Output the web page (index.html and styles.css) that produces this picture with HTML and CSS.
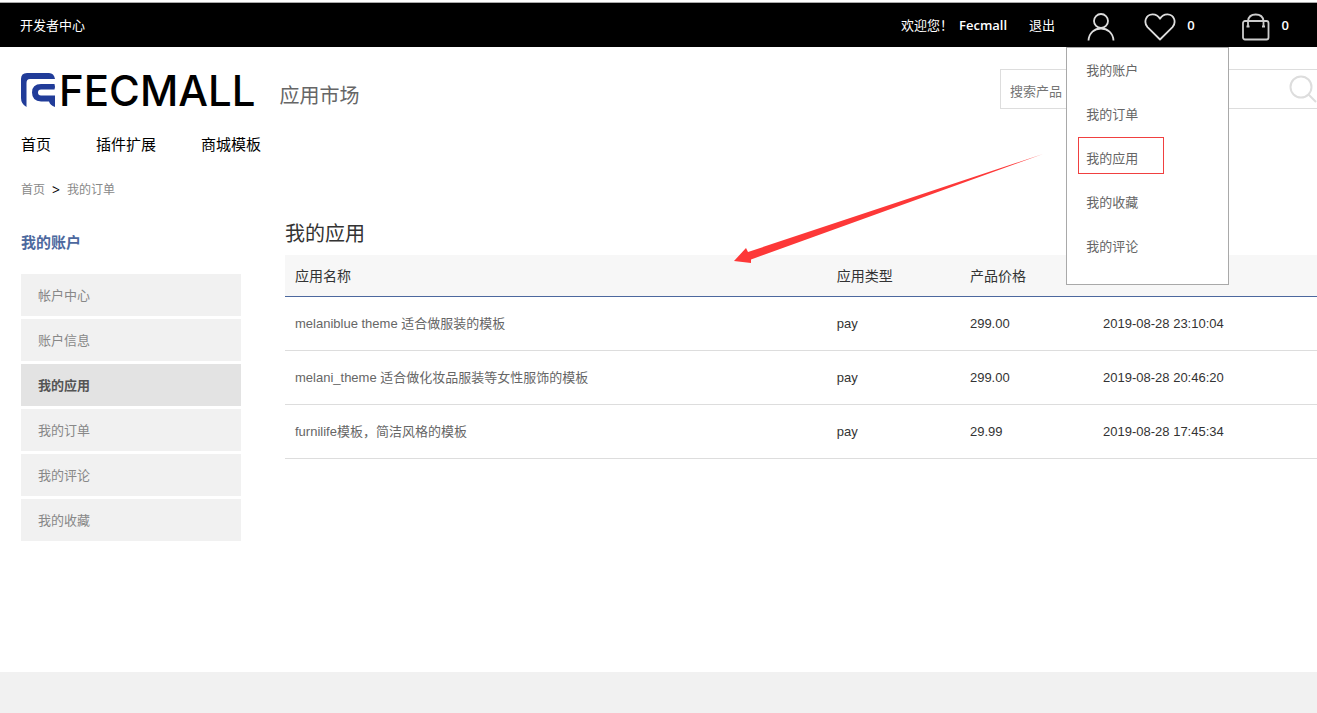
FILE: index.html
```html
<!DOCTYPE html>
<html lang="zh-CN">
<head>
<meta charset="utf-8">
<meta name="viewport" content="width=device-width, initial-scale=1">
<title>我的应用 - Fecmall 应用市场</title>
<link rel="stylesheet" href="styles.css">
</head>
<body>
<div class="topbar">
  <a class="topbar-link" href="#">开发者中心</a>
  <div class="topbar-right">
    <span class="welcome">欢迎您！</span>
    <a class="username" href="#">Fecmall</a>
    <a class="logout" href="#">退出</a>
    <div class="account">
      <button class="icon-button" type="button" aria-label="我的账户" aria-expanded="true">
        <svg width="28" height="28" viewBox="0 0 28 28" fill="none" stroke="#ddd" stroke-width="1.800"><circle cx="14" cy="8" r="7"/><path d="M1.500 27.500C2 20 7.500 15.500 14 15.500S26 20 26.500 27.500"/></svg>
      </button>
      <ul class="account-menu">
        <li><a href="#">我的账户</a></li>
        <li><a href="#">我的订单</a></li>
        <li><a class="marked" href="#">我的应用</a></li>
        <li><a href="#">我的收藏</a></li>
        <li><a href="#">我的评论</a></li>
      </ul>
    </div>
    <a class="counter wishlist" href="#" aria-label="收藏">
      <svg width="32" height="28" viewBox="0 0 32 28" fill="none" stroke="#ddd" stroke-width="1.800" stroke-linejoin="round"><path d="M16 26.500L3.500 14.200C-.5 9.500 1.500 1.500 8.500 1.300C12 1.200 14.500 3.200 16 5.800C17.500 3.200 20 1.200 23.500 1.300C30.500 1.500 32.500 9.500 28.500 14.200Z"/></svg>
      <span>0</span>
    </a>
    <a class="counter cart" href="#" aria-label="购物车">
      <svg width="28" height="28" viewBox="0 0 28 28" fill="none" stroke="#ccc" stroke-width="1.800"><rect x="1" y="8" width="25.500" height="18.500" rx="2"/><path d="M6 13.500V8C6.500 3.500 9 1.500 13.700 1.500S21 3.500 21.500 8V13.500"/><path d="M4.500 13.500h3M20 13.500h3"/></svg>
      <span>0</span>
    </a>
  </div>
</div>

<header class="header">
  <a class="brand" href="#">
    <svg class="brand-mark" width="36" height="36" viewBox="0 0 36 36" fill="#213c99"><path d="M7 1H29Q34 1 35 7H10Q6.500 7 6.500 11V35Q1 32 1 26V7Q1 1 7 1Z"/><path d="M21 12H34.500Q35.500 15 34.500 17.500H21Q18 17.500 18 20.500T21 23.500H35V35Q30 33 29 29.500H21Q12 29 12 20.500T21 12Z"/></svg>
    <span class="brand-name">FECMALL</span>
  </a>
  <span class="brand-sub">应用市场</span>
  <form class="search">
    <input class="search-input" type="text" placeholder="搜索产品" aria-label="搜索产品">
    <button class="search-button" type="submit" aria-label="搜索">
      <svg width="28" height="28" viewBox="0 0 28 28" fill="none" stroke="#ddd" stroke-width="2"><circle cx="12" cy="12" r="10.500"/><path d="M19.500 19.500L27 27"/></svg>
    </button>
  </form>
</header>

<nav class="nav">
  <a href="#">首页</a>
  <a href="#">插件扩展</a>
  <a href="#">商城模板</a>
</nav>

<div class="breadcrumb">
  <a href="#">首页</a>
  <span class="separator">&gt;</span>
  <span>我的订单</span>
</div>

<div class="content">
  <aside class="sidebar">
    <h2 class="sidebar-title">我的账户</h2>
    <ul class="sidebar-list">
      <li><a href="#">帐户中心</a></li>
      <li><a href="#">账户信息</a></li>
      <li><a class="active" href="#">我的应用</a></li>
      <li><a href="#">我的订单</a></li>
      <li><a href="#">我的评论</a></li>
      <li><a href="#">我的收藏</a></li>
    </ul>
  </aside>
  <main class="main">
    <h1 class="main-title">我的应用</h1>
    <table class="apps">
      <colgroup><col class="col-name"><col class="col-small"><col class="col-small"><col></colgroup>
      <thead>
        <tr><th>应用名称</th><th>应用类型</th><th>产品价格</th><th></th></tr>
      </thead>
      <tbody>
        <tr><td><a href="#">melaniblue theme 适合做服装的模板</a></td><td>pay</td><td>299.00</td><td>2019-08-28 23:10:04</td></tr>
        <tr><td><a href="#">melani_theme 适合做化妆品服装等女性服饰的模板</a></td><td>pay</td><td>299.00</td><td>2019-08-28 20:46:20</td></tr>
        <tr><td><a href="#">furnilife模板，简洁风格的模板</a></td><td>pay</td><td>29.99</td><td>2019-08-28 17:45:34</td></tr>
      </tbody>
    </table>
  </main>
</div>

<footer class="footer"></footer>

<svg class="arrow" width="312" height="112" viewBox="0 0 312 112" fill="#fd3838" aria-hidden="true"><path d="M1 109L13 96L15 100L310 2L18 107.500L18 111Z"/></svg>
</body>
</html>
```

FILE: styles.css
```css
*,
*::after {
  box-sizing: border-box;
}

body {
  position: relative;
  display: flex;
  flex-direction: column;
  min-height: 100vh;
  margin: 0;
  padding-top: 2px;
  background: #fff;
  color: #333;
  font: 13px/20px "Open Sans", "Noto Sans CJK SC", sans-serif;
}

a {
  color: inherit;
  text-decoration: none;
}

ul {
  margin: 0;
  padding: 0;
  list-style: none;
}

button {
  padding: 0;
  border: 0;
  background: none;
  cursor: pointer;
}

svg {
  display: block;
}

.topbar {
  display: flex;
  align-items: center;
  justify-content: space-between;
  height: 45px;
  padding: 0 28px 0 20px;
  border-top: 1px solid #aaa;
  background: #000;
  color: #fff;
}

.topbar-right {
  display: flex;
  align-items: center;
}

.topbar svg {
  margin-top: 4px;
}

.username {
  margin-left: 6px;
  font-weight: 600;
}

.logout {
  margin-left: 22px;
}

.account {
  position: relative;
  margin-left: 32px;
}

.icon-button {
  display: block;
}

.account-menu {
  position: absolute;
  z-index: 2;
  top: 38px;
  left: -21px;
  width: 163px;
  padding-bottom: 16px;
  border: 1px solid #a9a9a9;
  background: #fff;
  color: #666;
}

.account-menu a {
  position: relative;
  display: block;
  padding: 12px 19px;
}

.account-menu .marked::after {
  content: "";
  position: absolute;
  top: 1px;
  left: 11px;
  width: 86px;
  height: 37px;
  border: 1px solid #f04040;
}

.counter {
  display: flex;
  align-items: center;
  font-weight: 600;
}

.wishlist {
  gap: 11px;
  margin-left: 29px;
}

.cart {
  gap: 12px;
  margin-left: 47px;
}

.header {
  display: flex;
  height: 82px;
  padding: 22px 0 0 20px;
}

.brand {
  display: flex;
  align-items: center;
  height: 42px;
  gap: 3px;
  color: #000;
}

.brand-name {
  padding-top: 2px;
  font: 500 42px/42px Inter, sans-serif;
}

.brand-sub {
  margin-left: 24px;
  padding-top: 12px;
  color: #666;
  font-size: 20px;
  line-height: 30px;
}

.search {
  display: flex;
  width: 317px;
  height: 40px;
  margin-left: auto;
  border: 1px solid #ddd;
  border-right: 0;
}

.search-input {
  flex: 1;
  min-width: 0;
  padding: 4px 9px 0;
  border: 0;
  background: none;
  font: inherit;
}

.search-input::placeholder {
  color: #757575;
}

.nav {
  display: flex;
  gap: 45px;
  padding: 4px 21px;
  color: #000;
  font-size: 15px;
  line-height: 22px;
}

.breadcrumb {
  display: flex;
  gap: 7px;
  padding: 21px 21px 0;
  color: #888;
  font-size: 12px;
}

.separator {
  color: #000;
  font-size: 14px;
}

.content {
  display: flex;
  flex: 1;
  gap: 44px;
  padding: 19px 0 20px 21px;
}

.sidebar {
  width: 220px;
  padding-top: 12px;
}

.sidebar-title {
  margin: 0 0 21px;
  color: #4c689e;
  font-size: 15px;
  font-weight: 700;
  line-height: 22px;
}

.sidebar-list {
  display: grid;
  gap: 3px;
}

.sidebar-list a {
  display: block;
  padding: 11px 17px;
  background: #f1f1f1;
  color: #888;
}

.sidebar-list .active {
  background: #e3e3e3;
  color: #555;
  font-weight: 700;
}

.main {
  flex: 1;
  min-width: 0;
}

.main-title {
  margin: 0 0 6px;
  font-size: 20px;
  font-weight: 400;
  line-height: 30px;
}

.apps {
  width: 100%;
  border-collapse: separate;
  border-spacing: 0;
  table-layout: fixed;
  font-family: "Liberation Sans", "Noto Sans CJK SC", sans-serif;
}

.col-name {
  width: 52.500%;
}

.col-small {
  width: 12.900%;
}

.apps th {
  height: 42px;
  padding: 0 10px;
  border-bottom: 1px solid #4c689e;
  background: #f7f7f7;
  font-size: 14px;
  font-weight: 400;
  text-align: left;
}

.apps td {
  height: 54px;
  padding: 0 10px;
  border-bottom: 1px solid #ddd;
}

.apps td a {
  color: #666;
}

.footer {
  height: 41px;
  background: #f1f1f1;
}

.arrow {
  position: absolute;
  z-index: 3;
  top: 152px;
  left: 733px;
  pointer-events: none;
}
```
